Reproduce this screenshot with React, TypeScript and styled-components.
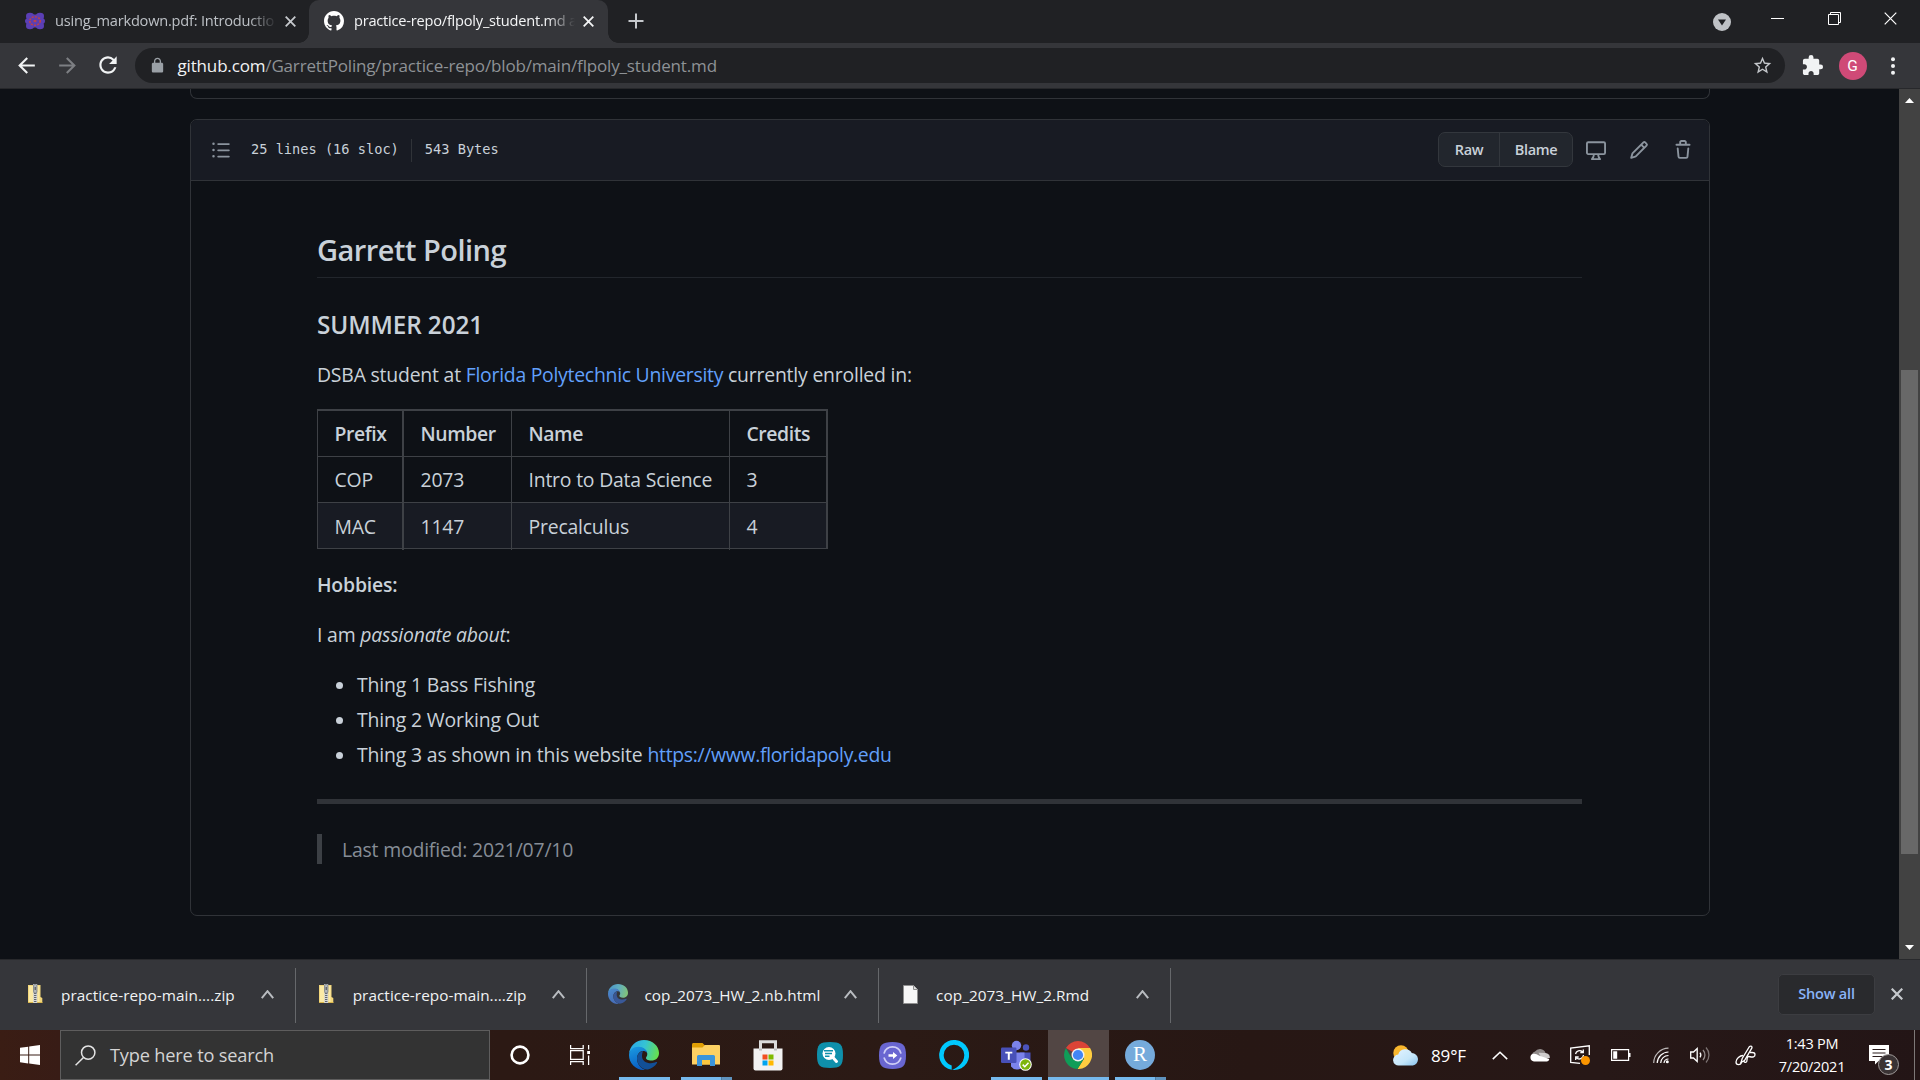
import React from 'react';
import styled, { createGlobalStyle, css } from 'styled-components';

const UI = `"Open Sans", "Noto Sans", sans-serif`;

const c = {
  frame: '#202124',
  toolbar: '#35363a',
  page: '#0e1116',
  panel: '#181b23',
  border: '#303338',
  tableLine: '#3e4146',
  text: '#c9d1d9',
  muted: '#868d96',
  link: '#62a0fb',
};

const Global = createGlobalStyle`
  *, *::before, *::after { box-sizing: border-box; }
  html, body { margin: 0; padding: 0; background: ${c.page}; overflow: hidden; }
  body { font-family: ${UI}; }
  svg { display: block; flex: none; }
`;

const Screen = styled.div`
  width: 1920px;
  height: 1080px;
  display: flex;
  flex-direction: column;
  overflow: hidden;
  background: ${c.page};
`;

/* ---------- tab strip ---------- */

const TabStrip = styled.header`
  height: 43px;
  flex: none;
  display: flex;
  align-items: stretch;
  background: ${c.frame};
`;

const Tab = styled.div<{ $active?: boolean }>`
  position: relative;
  display: flex;
  align-items: center;
  width: ${p => (p.$active ? 299 : 309)}px;
  padding-left: ${p => (p.$active ? 15 : 25)}px;
  padding-right: ${p => (p.$active ? 14 : 13)}px;
  padding-bottom: 1px;
  color: ${p => (p.$active ? '#f4f5f6' : '#bdc1c6')};
  ${p =>
    p.$active &&
    css`
      background: ${c.toolbar};
      border-radius: 10px 10px 0 0;
      &::before,
      &::after {
        content: '';
        position: absolute;
        bottom: 0;
        width: 10px;
        height: 10px;
      }
      &::before {
        left: -10px;
        background: radial-gradient(circle at 0 0, transparent 9.5px, ${c.toolbar} 10px);
      }
      &::after {
        right: -10px;
        background: radial-gradient(circle at 100% 0, transparent 9.5px, ${c.toolbar} 10px);
      }
    `}
`;

const TabTitle = styled.span`
  flex: 1;
  margin: 0 6px 2px 10px;
  font-size: 14.6px;
  line-height: 20px;
  letter-spacing: -0.22px;
  white-space: nowrap;
  mask-image: linear-gradient(90deg, #000 calc(100% - 30px), transparent calc(100% - 2px));
`;

const NewTab = styled.div`
  display: flex;
  align-items: center;
  margin-left: 20px;
  padding-bottom: 1px;
`;

const WindowControls = styled.div`
  margin-left: auto;
  margin-right: 1px;
  display: flex;
  align-items: flex-start;
`;

const ControlSlot = styled.div<{ $w: number; $h: number }>`
  width: ${p => p.$w}px;
  height: ${p => p.$h}px;
  display: flex;
  align-items: center;
  justify-content: center;
`;

/* ---------- toolbar ---------- */

const Toolbar = styled.nav`
  height: 46px;
  flex: none;
  display: flex;
  align-items: center;
  background: ${c.toolbar};
  border-bottom: 1px solid #27282b;
  padding-left: 7px;
`;

const NavButton = styled.span`
  width: 40.5px;
  display: flex;
  justify-content: center;
  padding-right: 1px;
  padding-bottom: 1px;
`;

const Omnibox = styled.div`
  width: 1650px;
  height: 35px;
  margin-left: 6px;
  padding: 0 12px 0 14px;
  display: flex;
  align-items: center;
  background: ${c.frame};
  border-radius: 18px;
`;

const Url = styled.span`
  flex: 1;
  margin-left: 12px;
  font-size: 17px;
  line-height: 34px;
  letter-spacing: -0.16px;
  color: #8e9296;
  b {
    font-weight: 400;
    color: #f1f3f4;
  }
`;

const ToolbarRight = styled.div`
  display: flex;
  align-items: center;
  margin-left: 16px;
`;

const Avatar = styled.span`
  width: 28px;
  height: 28px;
  margin: 0 24px 0 15px;
  border-radius: 50%;
  background: #cf4a77;
  color: #fff;
  font: 15.5px/28px Roboto, sans-serif;
  text-align: center;
`;

/* ---------- viewport ---------- */

const Viewport = styled.main`
  height: 870px;
  flex: none;
  display: flex;
  justify-content: space-between;
`;

const PageColumn = styled.div`
  width: 1520px;
  margin-left: 190px;
`;

const PreviousBox = styled.div`
  height: 10px;
  border: 1px solid ${c.border};
  border-top: 0;
  border-radius: 0 0 7px 7px;
`;

const FileBox = styled.section`
  margin-top: 20px;
  height: 797px;
  border: 1px solid ${c.border};
  border-radius: 7px;
  overflow: hidden;
`;

const FileHeader = styled.div`
  height: 61px;
  display: flex;
  align-items: center;
  padding: 0 16px 1px 20px;
  background: ${c.panel};
  border-bottom: 1px solid ${c.border};
  color: #8b949e;
`;

const FileInfo = styled.div`
  display: flex;
  align-items: center;
  margin-left: 20px;
  font: 13.65px/23px 'DejaVu Sans Mono', monospace;
  color: ${c.text};
`;

const InfoDivider = styled.i`
  width: 1px;
  height: 23px;
  margin: 2px 13px 0 12px;
  background: ${c.border};
`;

const HeaderActions = styled.div`
  margin-left: auto;
  display: flex;
  align-items: center;
`;

const ButtonGroup = styled.div`
  display: flex;
  height: 35px;
  margin-right: 13px;
  border: 1px solid #33373d;
  border-radius: 7px;
  background: #22262d;
`;

const GroupButton = styled.span<{ $w: number }>`
  width: ${p => p.$w}px;
  text-align: center;
  font-size: 14.5px;
  font-weight: 600;
  line-height: 33px;
  letter-spacing: -0.3px;
  color: ${c.text};
  & + & {
    border-left: 1px solid #33373d;
  }
`;

const ActionIcon = styled.span<{ $gap?: number }>`
  margin-left: ${p => p.$gap ?? 0}px;
`;

const Article = styled.article`
  width: 1265px;
  margin: 50px 0 0 126px;
  font-size: 19.4px;
  line-height: 30px;
  letter-spacing: -0.2px;
  color: ${c.text};
`;

const Title = styled.h1`
  margin: 0;
  height: 47px;
  border-bottom: 1px solid #22262c;
  font-size: 29px;
  font-weight: 600;
  line-height: 38px;
  letter-spacing: -0.52px;
`;

const Subtitle = styled.h3`
  margin: 31px 0 20px;
  font-size: 24.3px;
  font-weight: 600;
  line-height: 31px;
  letter-spacing: -0.1px;
`;

const Paragraph = styled.p<{ $bottom: number }>`
  margin: 0 0 ${p => p.$bottom}px;
  strong {
    font-weight: 600;
  }
`;

const Link = styled.a<{ $tight?: number }>`
  color: ${c.link};
  letter-spacing: ${p => p.$tight ?? -0.26}px;
`;

const Table = styled.div`
  width: 511px;
  border: solid ${c.tableLine};
  border-width: 2px 2px 1px 1px;
  margin-bottom: 21px;
`;

const Row = styled.div<{ $head?: boolean; $shaded?: boolean }>`
  display: grid;
  grid-template-columns: 86px 108px 218px 96px;
  height: 46px;
  line-height: 45px;
  font-weight: ${p => (p.$head ? 600 : 400)};
  letter-spacing: ${p => (p.$head ? -0.42 : -0.2)}px;
  background: ${p => (p.$shaded ? c.panel : 'transparent')};
  border-bottom: 1px solid ${c.tableLine};
  &:last-child {
    height: 45px;
    border-bottom: 0;
    line-height: 47px;
  }
`;

const Cell = styled.span`
  padding-left: 16.5px;
  border-right: 1px solid ${c.tableLine};
  &:first-child {
    border-right-width: 2px;
  }
  &:last-child {
    border-right: 0;
  }
`;

const List = styled.ul`
  margin: 0;
  padding: 0 0 0 19px;
  list-style: none;
  display: flex;
  flex-direction: column;
  gap: 5px;
`;

const ListItem = styled.li`
  display: flex;
  align-items: center;
  white-space: pre;
  letter-spacing: -0.15px;
  &::before {
    content: '';
    width: 7px;
    height: 7px;
    margin: 1px 14px 0 0;
    border-radius: 50%;
    background: ${c.text};
  }
`;

const Rule = styled.hr`
  margin: 29px 0 30px;
  height: 5px;
  border: 0;
  background: #303338;
`;

const Quote = styled.blockquote`
  margin: 0;
  padding-left: 20px;
  border-left: 5px solid #3c4045;
  line-height: 31px;
  height: 30px;
  letter-spacing: -0.18px;
  color: ${c.muted};
`;

const Scrollbar = styled.aside`
  width: 21px;
  display: flex;
  flex-direction: column;
  align-items: center;
  background: #424242;
  padding: 9px 1px 9px 0;
`;

const Thumb = styled.div`
  width: 17px;
  height: 484px;
  margin: 267px 0 auto;
  background: #686868;
`;

/* ---------- downloads shelf ---------- */

const Shelf = styled.section`
  height: 71px;
  flex: none;
  display: flex;
  align-items: center;
  padding-left: 4px;
  background: ${c.toolbar};
  border-top: 1px solid #28292c;
`;

const Download = styled.div`
  width: 291.7px;
  height: 55px;
  display: flex;
  align-items: center;
  padding: 0 21px 0 21px;
  border-right: 1px solid #66686b;
`;

const FileIcon = styled.span`
  width: 20px;
  margin-bottom: 2px;
  display: flex;
  justify-content: center;
`;

const FileName = styled.span`
  flex: 1;
  margin-left: 16px;
  font-size: 15.3px;
  line-height: 20px;
  letter-spacing: 0.06px;
  color: #f1f3f4;
`;

const ShowAll = styled.span`
  width: 97px;
  height: 41px;
  margin: 0 16px 2px auto;
  border: 1px solid #3c3d41;
  border-radius: 5px;
  background: #292a2d;
  color: #8ab4f8;
  font-size: 14.5px;
  font-weight: 600;
  line-height: 38px;
  letter-spacing: -0.2px;
  text-align: center;
`;

const ShelfClose = styled.span`
  margin: 0 17px 2px 0;
`;

/* ---------- taskbar ---------- */

const Taskbar = styled.footer`
  height: 50px;
  flex: none;
  display: flex;
  background: linear-gradient(90deg, #3a1d14 0, #381c16 60px, #2c1914 500px, #2b1a15 900px, #271714 1250px, #271817 1600px, #231516 1920px);
`;

const Slot = styled.div<{ $w?: number; $active?: boolean; $gap?: number }>`
  width: ${p => p.$w ?? 62}px;
  margin-left: ${p => p.$gap ?? 0}px;
  display: flex;
  flex-direction: column;
  align-items: center;
`;

const SlotFace = styled.div<{ $active?: boolean }>`
  width: 61px;
  height: 47px;
  padding-top: 3px;
  display: flex;
  align-items: center;
  justify-content: center;
  background: ${p => (p.$active ? '#524644' : 'transparent')};
`;

const Running = styled.div<{ $stacked?: boolean; $active?: boolean }>`
  width: ${p => (p.$active ? 61 : 51)}px;
  height: 3px;
  background: ${p => (p.$stacked ? 'linear-gradient(90deg, #76b9ed 40px, #3f6585 40px, #5f93be 41px)' : '#76b9ed')};
`;

const SearchBox = styled.div`
  width: 430px;
  height: 50px;
  display: flex;
  align-items: center;
  padding-left: 14px;
  background: #333;
  border: 1px solid #5e5d5d;
  color: #d4d4d4;
  font-size: 18.2px;
  letter-spacing: -0.18px;
  gap: 14px;
`;

const Tray = styled.div`
  margin-left: auto;
  display: flex;
  align-items: center;
  color: #fff;
`;

const TrayItem = styled.span<{ $w: number; $gap: number }>`
  width: ${p => p.$w}px;
  margin-left: ${p => p.$gap}px;
  display: flex;
  justify-content: center;
`;

const Temperature = styled(TrayItem)`
  font-size: 17px;
  line-height: 46px;
  letter-spacing: -0.1px;
  padding-top: 2px;
`;

const Clock = styled.div`
  width: 80px;
  margin-left: 16px;
  font-size: 14.5px;
  line-height: 23px;
  letter-spacing: -0.25px;
  text-align: center;
`;

const ActionCenter = styled.div`
  position: relative;
  width: 31px;
  height: 50px;
  margin-left: 17px;
  padding-top: 15px;
`;

const Badge = styled.span`
  position: absolute;
  left: 9px;
  top: 24px;
  width: 21px;
  height: 21px;
  border: 1px solid #a09b9a;
  border-radius: 50%;
  background: #3a3334;
  font-size: 14px;
  font-weight: 700;
  line-height: 19px;
  text-align: center;
`;

const DesktopEdge = styled.i`
  width: 6px;
  height: 50px;
  margin-left: 14px;
  border-left: 1px solid #7d7877;
`;

/* ---------- icons ---------- */

const Glyph = ({ size, d, color = 'currentColor', box = 24 }: { size: number; d: string; color?: string; box?: number }) => (
  <svg width={size} height={size} viewBox={`0 0 ${box} ${box}`} fill={color}>
    <path fillRule="evenodd" d={d} />
  </svg>
);

const P = {
  github:
    'M8 0C3.58 0 0 3.58 0 8c0 3.54 2.29 6.53 5.47 7.59.4.07.55-.17.55-.38 0-.19-.01-.82-.01-1.49-2.01.37-2.53-.49-2.69-.94-.09-.23-.48-.94-.82-1.13-.28-.15-.68-.52-.01-.53.63-.01 1.08.58 1.23.82.72 1.21 1.87.87 2.33.66.07-.52.28-.87.51-1.07-1.78-.2-3.64-.89-3.64-3.95 0-.87.31-1.59.82-2.15-.08-.2-.36-1.02.08-2.12 0 0 .67-.21 2.2.82.64-.18 1.32-.27 2-.27s1.36.09 2 .27c1.53-1.04 2.2-.82 2.2-.82.44 1.1.16 1.92.08 2.12.51.56.82 1.27.82 2.15 0 3.07-1.87 3.75-3.65 3.95.29.25.54.73.54 1.48 0 1.07-.01 1.93-.01 2.2 0 .21.15.46.55.38A8.01 8.01 0 0016 8c0-4.42-3.58-8-8-8z',
  back: 'M20 11H7.83l5.59-5.59L12 4l-8 8 8 8 1.41-1.41L7.83 13H20v-2z',
  forward: 'M12 4l-1.41 1.41L16.17 11H4v2h12.17l-5.58 5.59L12 20l8-8z',
  reload:
    'M17.65 6.35A7.958 7.958 0 0012 4c-4.42 0-7.99 3.58-7.99 8s3.57 8 7.99 8c3.73 0 6.84-2.55 7.73-6h-2.08A5.99 5.99 0 0112 18c-3.31 0-6-2.69-6-6s2.69-6 6-6c1.66 0 3.14.69 4.22 1.78L13 11h7V4l-2.35 2.35z',
  lock: 'M18 8h-1V6c0-2.76-2.24-5-5-5S7 3.24 7 6v2H6c-1.1 0-2 .9-2 2v10c0 1.1.9 2 2 2h12c1.1 0 2-.9 2-2V10c0-1.1-.9-2-2-2zM8.9 6c0-1.71 1.39-3.1 3.1-3.1s3.1 1.39 3.1 3.1v2H8.9V6z',
  star: 'M22 9.24l-7.19-.62L12 2 9.19 8.63 2 9.24l5.46 4.73L5.82 21 12 17.27 18.18 21l-1.63-7.03L22 9.24zM12 15.4l-3.76 2.27 1-4.28-3.32-2.88 4.38-.38L12 6.1l1.71 4.04 4.38.38-3.32 2.88 1 4.28L12 15.4z',
  puzzle:
    'M20.5 11H19V7c0-1.1-.9-2-2-2h-4V3.5a2.5 2.5 0 00-5 0V5H4c-1.1 0-1.99.9-1.99 2v3.8H3.5c1.49 0 2.7 1.21 2.7 2.7s-1.21 2.7-2.7 2.7H2V20c0 1.1.9 2 2 2h3.8v-1.5c0-1.49 1.21-2.7 2.7-2.7s2.7 1.21 2.7 2.7V22H17c1.1 0 2-.9 2-2v-4h1.5a2.5 2.5 0 000-5z',
  list: 'M2 4a1 1 0 100-2 1 1 0 000 2zm3.75-1.5a.75.75 0 000 1.5h8.5a.75.75 0 000-1.5h-8.5zm0 5a.75.75 0 000 1.5h8.5a.75.75 0 000-1.5h-8.5zm0 5a.75.75 0 000 1.5h8.5a.75.75 0 000-1.5h-8.5zM3 8a1 1 0 11-2 0 1 1 0 012 0zm-1 6a1 1 0 100-2 1 1 0 000 2z',
  desktop:
    'M1.75 2.5h12.5a.25.25 0 01.25.25v7.5a.25.25 0 01-.25.25H1.75a.25.25 0 01-.25-.25v-7.5a.25.25 0 01.25-.25zM14.25 1H1.75A1.75 1.75 0 000 2.75v7.5C0 11.216.784 12 1.75 12h3.727c-.1 1.041-.52 1.872-1.292 2.757A.75.75 0 004.75 16h6.5a.75.75 0 00.565-1.243c-.772-.885-1.193-1.716-1.292-2.757h3.727A1.75 1.75 0 0016 10.25v-7.5A1.75 1.75 0 0014.25 1zM9.018 12H6.982a5.72 5.72 0 01-.765 2.5h3.566a5.72 5.72 0 01-.765-2.5z',
  pencil:
    'M11.013 1.427a1.75 1.75 0 012.474 0l1.086 1.086a1.75 1.75 0 010 2.474l-8.61 8.61c-.21.21-.47.364-.756.445l-3.251.93a.75.75 0 01-.927-.928l.929-3.25a1.75 1.75 0 01.445-.758l8.61-8.61zm1.414 1.06a.25.25 0 00-.354 0L10.811 3.75l1.439 1.44 1.263-1.263a.25.25 0 000-.354l-1.086-1.086zM11.189 6.25L9.75 4.81l-6.286 6.287a.25.25 0 00-.064.108l-.558 1.953 1.953-.558a.249.249 0 00.108-.064l6.286-6.286z',
  trash:
    'M6.5 1.75a.25.25 0 01.25-.25h2.5a.25.25 0 01.25.25V3h-3V1.75zm4.5 0V3h2.25a.75.75 0 010 1.5H2.75a.75.75 0 010-1.5H5V1.75C5 .784 5.784 0 6.75 0h2.5C10.216 0 11 .784 11 1.75zM4.496 6.675a.75.75 0 10-1.492.15l.66 6.6A1.75 1.75 0 005.405 15h5.19c.9 0 1.652-.681 1.741-1.576l.66-6.6a.75.75 0 00-1.492-.149l-.66 6.6a.25.25 0 01-.249.225h-5.19a.25.25 0 01-.249-.225l-.66-6.6z',
};

const Cross = ({ size, w, color }: { size: number; w: number; color: string }) => (
  <svg width={size} height={size} viewBox={`0 0 ${size} ${size}`} stroke={color} strokeWidth={w} fill="none">
    <path d={`M.7 .7L${size - 0.7} ${size - 0.7}M${size - 0.7} .7L.7 ${size - 0.7}`} />
  </svg>
);

const GearBlob = () => (
  <svg width="20" height="18" viewBox="0 0 20 22" preserveAspectRatio="none">
    <g fill="#5b3fb5">
      <rect x="1.5" y="3" width="17" height="16" rx="3" />
      <circle cx="5" cy="5" r="4" />
      <circle cx="15" cy="5" r="4" />
      <circle cx="3.5" cy="11" r="3.5" />
      <circle cx="16.5" cy="11" r="3.5" />
      <circle cx="5" cy="17" r="4" />
      <circle cx="15" cy="17" r="4" />
    </g>
    <circle cx="10" cy="11" r="5.2" fill="none" stroke="#b8434f" strokeWidth="1.8" strokeDasharray="2.2 1.2" />
    <circle cx="10" cy="11" r="1.6" fill="#b8434f" />
  </svg>
);

const ZipIcon = () => (
  <svg width="15" height="20" viewBox="0 0 15 20">
    <path d="M0 1h12.5v12l1.8 1v5H0z" fill="#f3d77b" />
    <path d="M1 2h4v16H1zM9.5 2h2v16h-2z" fill="#fbeaa6" />
    <path d="M0 18h14.3v1H0z" fill="#d9b64c" />
    <rect x="5.2" y="0" width="4" height="19" fill="#d6d8da" />
    <path d="M7.2 9v10" stroke="#63676b" strokeWidth="2.4" strokeDasharray="1 1" />
    <rect x="5.6" y=".5" width="3.3" height="8.5" rx="1.2" fill="#b4b8bc" stroke="#74787c" strokeWidth=".8" />
    <rect x="6.6" y="3" width="1.3" height="3" fill="#5c6064" />
  </svg>
);

const PageIcon = () => (
  <svg width="15" height="19" viewBox="0 0 15 19">
    <path d="M.5 .5h10l4 4v14H.5z" fill="#f7f7f7" stroke="#8f8f8f" />
    <path d="M10.5 .5v4h4" fill="#dedede" stroke="#8f8f8f" />
  </svg>
);

const EdgeIcon = ({ size, id, dim }: { size: number; id: string; dim?: boolean }) => (
  <svg width={size} height={size} viewBox="0 0 30 30" opacity={dim ? 0.85 : 1}>
    <defs>
      <linearGradient id={`${id}a`} x1="0" y1=".3" x2="1" y2=".5">
        <stop offset="0" stopColor={dim ? '#4fa6e0' : '#2aa7e8'} />
        <stop offset=".5" stopColor={dim ? '#68c3d8' : '#35c3d4'} />
        <stop offset="1" stopColor={dim ? '#8fdc84' : '#66e04e'} />
      </linearGradient>
      <linearGradient id={`${id}b`} x1="0" y1="0" x2=".3" y2="1">
        <stop offset="0" stopColor={dim ? '#4f9ae6' : '#1b9de2'} />
        <stop offset="1" stopColor={dim ? '#4a78cf' : '#0a5fc4'} />
      </linearGradient>
    </defs>
    <path d="M0 14C.6 6 7 0 15 0c8.500 0 15 6 15 13 0 5-3.500 7.500-7.500 7.500-4 0-5.500-1.500-5.500-2.500s1.300-1.600 1.300-4C18.300 10.500 14.500 7.500 10 7.500 5 7.500 1 10.500 0 14z" fill={`url(#${id}a)`} />
    <path d="M0 15c0-5 4.500-8.300 9.500-8.300S18 10 18.200 13c-1-1.500-2.600-2-4-2-3.500 0-6.200 3.500-6.200 7.500 0 5 3 9.500 8 11.400C7 30.600 0 23.500 0 15z" fill={`url(#${id}b)`} />
    <path d="M14 11.200c-3.500.5-6 3.700-6 7.300 0 6 5 11.500 11 10.900 3.700-.8 7.200-3.400 9-6.400.4-.8-.2-1.300-1-.9-4.500 2.400-14.500 1.400-14-6.900.1-1.700.5-3 1-4z" fill={dim ? '#3a5fa8' : '#124f96'} />
  </svg>
);

const ExplorerIcon = () => (
  <svg width="28" height="24" viewBox="0 0 28 24">
    <path d="M0 1.500C0 .6.600 0 1.500 0h9l2.500 2.500v3H0z" fill="#e09f05" />
    <path d="M0 4.500h10.500l2.300-2.500H27a1 1 0 011 1v18.500H0z" fill="#fdd163" />
    <path d="M5 23v-9.500a1.500 1.500 0 011.500-1.500h15a1.500 1.500 0 011.500 1.500V23h-5v-6h-8v6z" fill="#3b95db" />
    <path d="M10 17h8v4.500h-8z" fill="#fbc740" />
  </svg>
);

const StoreIcon = () => (
  <svg width="30" height="31" viewBox="0 0 30 31">
    <path d="M7.500 9V1.800h15V9" fill="none" stroke="#dcdcdc" strokeWidth="3" />
    <path d="M.5 8.500h29V28.500a2 2 0 01-2 2h-25a2 2 0 01-2-2z" fill="#f2f2f2" />
    <path d="M6 8.500h3v2H6zM21 8.500h3v2h-3z" fill="#bdbdbd" />
    <path d="M9.500 14.500h5v5h-5z" fill="#f25022" />
    <path d="M15.500 14.500h5v5h-5z" fill="#7fba00" />
    <path d="M9.500 20.500h5v5h-5z" fill="#00a4ef" />
    <path d="M15.500 20.500h5v5h-5z" fill="#ffb900" />
  </svg>
);

const FinderIcon = () => (
  <svg width="26" height="26" viewBox="0 0 26 26">
    <path d="M13 0c10.500 0 13 2.500 13 13s-2.500 13-13 13S0 23.500 0 13 2.500 0 13 0z" fill="#0f90ab" />
    <circle cx="12" cy="11.500" r="6.500" fill="#fff" />
    <path d="M15.500 15l4 4.500" stroke="#fff" strokeWidth="3" strokeLinecap="round" />
    <path d="M7 8.700h9M8 11.500h7M8 14.200h4.500" stroke="#0f90ab" strokeWidth="1.400" />
  </svg>
);

const TransferIcon = () => (
  <svg width="27" height="27" viewBox="0 0 27 27">
    <path d="M13.500 0C24 0 27 3 27 13.500S24 27 13.500 27 0 24 0 13.500 3 0 13.500 0z" fill="#6966d1" />
    <path d="M5.200 11a8.700 8.700 0 0116.600 0M21.800 16a8.700 8.700 0 01-16.600 0" fill="none" stroke="#cfcff6" strokeWidth="1.700" strokeLinecap="round" />
    <path d="M9.500 12.200h4.500V9.900l4.300 3.600-4.300 3.600v-2.300H9.500z" fill="#fff" />
  </svg>
);

const AlexaIcon = () => (
  <svg width="30" height="30" viewBox="0 0 30 30">
    <path d="M12.700 29.800A15 15 0 1115 30l-2 0c2.500-1.200 12.300-5.500 12.300-15A10.300 10.300 0 104.700 15c0 5 3.500 9 8 10.400z" fill="#00c8fd" />
  </svg>
);

const TeamsIcon = () => (
  <svg width="31" height="31" viewBox="0 0 31 31">
    <circle cx="25" cy="7.500" r="3.200" fill="#4b53bc" />
    <path d="M19 12.500h10.500v9a5 5 0 01-7 4.500z" fill="#4b53bc" />
    <circle cx="15.500" cy="5.500" r="4.700" fill="#7b83eb" />
    <path d="M10 12.500h13.500v10a7.500 7.500 0 01-13.500 4z" fill="#7b83eb" />
    <rect x="0" y="7.500" width="15.500" height="15.500" rx="1.200" fill="#4850b8" />
    <path d="M4.300 11.700h7v1.900H8.800v6.200H6.800v-6.200H4.300z" fill="#fff" />
    <circle cx="24.500" cy="24.500" r="6.300" fill="#fff" />
    <circle cx="24.500" cy="24.500" r="5.200" fill="#7cb50a" />
    <path d="M21.700 24.600l2.100 2.100 3.700-4" fill="none" stroke="#fff" strokeWidth="1.500" />
  </svg>
);

const ChromeIcon = () => (
  <svg width="28" height="28" viewBox="0 0 28 28">
    <path d="M14 14L1.900 7A14 14 0 0126.100 7z" fill="#db4437" />
    <path d="M14 7h12.100A14 14 0 0113.500 28l6.600-10.500z" fill="#ffcd40" />
    <path d="M1.900 7A14 14 0 0013.500 28l6.500-10.500L8 17.500z" fill="#0f9d58" />
    <circle cx="14" cy="14" r="6.500" fill="#f1f1f1" />
    <circle cx="14" cy="14" r="5.100" fill="#4285f4" />
  </svg>
);

const RDisc = styled.span`
  width: 30px;
  height: 30px;
  border-radius: 50%;
  background: #75aadb;
  color: #fff;
  font: 21px/29px 'Liberation Serif', serif;
  text-align: center;
`;

const WeatherIcon = () => (
  <svg width="26" height="21" viewBox="0 0 26 21">
    <defs>
      <linearGradient id="cloud" x1="0" y1="0" x2="1" y2="1">
        <stop offset="0" stopColor="#e4f4ff" />
        <stop offset=".6" stopColor="#c5e6fa" />
        <stop offset="1" stopColor="#86c1ec" />
      </linearGradient>
    </defs>
    <circle cx="8" cy="8" r="7.700" fill="#f8b62d" />
    <path d="M6 20.500a5.500 5.500 0 01-.8-11A7.500 7.500 0 0118.800 8a6.300 6.300 0 011 12.500z" fill="url(#cloud)" />
  </svg>
);

const CloudIcon = () => (
  <svg width="20" height="14" viewBox="0 0 20 14">
    <path d="M2 10.500a5 5 0 013-7 6 6 0 0110.500 1.200L8 10z" fill="#8f8988" />
    <path d="M8.500 4.700l7 .2a4.500 4.500 0 014.300 5l-8 .5z" fill="#cfcccc" />
    <path d="M4 13.500a3.900 3.900 0 01-.5-7.700c2-.3 3.500.5 6 2l9.800 3.200a3 3 0 01-2.300 2.500z" fill="#fff" />
  </svg>
);

const UpdateIcon = () => (
  <svg width="20" height="20" viewBox="0 0 20 20" fill="none" stroke="#fff" strokeWidth="1.300">
    <path d="M10 18.300l-9.300-1V3L19.300.8V10" />
    <path d="M5.500 9a4.300 4.300 0 017-2.300M13.300 4.500v3h-3M13.500 10a4.300 4.300 0 01-7 3M5.700 15v-3h3" />
    <circle cx="15.500" cy="15.500" r="4.500" fill="#fb9500" stroke="none" />
  </svg>
);

const BatteryIcon = () => (
  <svg width="20" height="12" viewBox="0 0 20 12">
    <path d="M.6.600h17v10.800H.6z" fill="none" stroke="#fff" strokeWidth="1.200" />
    <path d="M2.200 2.200h4v7.600h-4zM18 4h1.500v4H18z" fill="#fff" />
  </svg>
);

const WifiIcon = () => (
  <svg width="17" height="17" viewBox="0 0 17 17" fill="none" stroke="#fff" strokeWidth="1.200">
    <path d="M.7 16A15 15 0 0115.500 1.200" opacity=".7" />
    <path d="M4.200 16A11.500 11.500 0 0115.500 5" />
    <path d="M7.700 16a7.800 7.800 0 017.800-7.500M11 16a4.500 4.500 0 014.500-4" />
    <circle cx="14.300" cy="14.700" r="1.500" fill="#fff" stroke="none" />
  </svg>
);

const SpeakerIcon = () => (
  <svg width="21" height="18" viewBox="0 0 21 18" fill="none" stroke="#fff" strokeWidth="1.300">
    <path d="M.7 6h2.800L7.200 2.500v13L3.500 12H.7z" />
    <path d="M10 6.700a4 4 0 010 4.600" />
    <path d="M13 4a7.500 7.500 0 010 10" opacity=".5" />
    <path d="M16 1.500a11 11 0 010 15" opacity=".4" />
  </svg>
);

const PenIcon = () => (
  <svg width="21" height="21" viewBox="0 0 21 21" fill="none" stroke="#fff" strokeWidth="1.300">
    <path d="M6 17.500l1.200-4L14.500 1.500c1.500-1 3 0 2.300 1.700L9.500 15.500z" />
    <path d="M8 10.500c-3 0-7 3-7 6.500 0 3.500 5 3.500 5.500 0M8.500 15.800c1.500 2.500 3.500 2 3.500-.8 0-1.500 0-3.500 1.500-3.500s3 1 5 .3c2-.8 2.500-4.300-1.500-4.300h-2" />
  </svg>
);

const Caret = ({ w, h, s, color }: { w: number; h: number; s: number; color: string }) => (
  <svg width={w} height={h} viewBox={`0 0 ${w} ${h}`} fill="none" stroke={color} strokeWidth={s}>
    <path d={`M.8 ${h - 0.9}L${w / 2} 1.200L${w - 0.8} ${h - 0.9}`} />
  </svg>
);

const CaretLift = styled.span`
  padding-bottom: 2px;
`;

const downloads = [
  { name: 'practice-repo-main....zip', icon: <ZipIcon /> },
  { name: 'practice-repo-main....zip', icon: <ZipIcon /> },
  { name: 'cop_2073_HW_2.nb.html', icon: <EdgeIcon size={20} id="dl" dim /> },
  { name: 'cop_2073_HW_2.Rmd', icon: <PageIcon /> },
];

const courses = [
  ['COP', '2073', 'Intro to Data Science', '3'],
  ['MAC', '1147', 'Precalculus', '4'],
];

const apps: { icon: React.ReactNode; running?: boolean; stacked?: boolean; active?: boolean }[] = [
  { icon: <EdgeIcon size={30} id="tb" />, running: true },
  { icon: <ExplorerIcon />, running: true, stacked: true },
  { icon: <StoreIcon /> },
  { icon: <FinderIcon /> },
  { icon: <TransferIcon /> },
  { icon: <AlexaIcon /> },
  { icon: <TeamsIcon />, running: true },
  { icon: <ChromeIcon />, running: true, active: true },
  { icon: <RDisc>R</RDisc>, running: true, stacked: true },
];

export default function App() {
  return (
    <Screen>
      <Global />
      <TabStrip>
        <Tab>
          <GearBlob />
          <TabTitle>using_markdown.pdf: Introductio</TabTitle>
          <Cross size={11} w={1.8} color="#c6c9cd" />
        </Tab>
        <Tab $active>
          <Glyph size={20} box={16} d={P.github} color="#fff" />
          <TabTitle>practice-repo/flpoly_student.md a</TabTitle>
          <Cross size={11} w={1.8} color="#f4f5f6" />
        </Tab>
        <NewTab>
          <svg width="16" height="16" viewBox="0 0 16 16" stroke="#c6c9cd" strokeWidth="2">
            <path d="M8 .5v15M.5 8h15" />
          </svg>
        </NewTab>
        <WindowControls>
          <ControlSlot $w={54} $h={43}>
            <svg width="18" height="18" viewBox="0 0 18 18">
              <circle cx="9" cy="9" r="9" fill="#bfc2c6" />
              <path d="M5 6.500h8L9 12.500z" fill={c.frame} />
            </svg>
          </ControlSlot>
          <ControlSlot $w={57} $h={37}>
            <svg width="13" height="1" viewBox="0 0 13 1"><path d="M0 0h13v1H0z" fill="#fff" /></svg>
          </ControlSlot>
          <ControlSlot $w={56} $h={37}>
            <svg width="13" height="13" viewBox="0 0 13 13" fill="none" stroke="#fff">
              <path d="M.5 2.500h10v10H.5zM2.500 2.500v-2h10v10h-2" />
            </svg>
          </ControlSlot>
          <ControlSlot $w={57} $h={37}>
            <Cross size={13} w={1.2} color="#fff" />
          </ControlSlot>
        </WindowControls>
      </TabStrip>

      <Toolbar>
        <NavButton><Glyph size={25} d={P.back} color="#f1f3f4" /></NavButton>
        <NavButton><Glyph size={25} d={P.forward} color="#7d7f83" /></NavButton>
        <NavButton><Glyph size={26} d={P.reload} color="#f1f3f4" /></NavButton>
        <Omnibox>
          <Glyph size={17} d={P.lock} color="#9aa0a6" />
          <Url><b>github.com</b>/GarrettPoling/practice-repo/blob/main/flpoly_student.md</Url>
          <Glyph size={21} d={P.star} color="#c4c7cb" />
        </Omnibox>
        <ToolbarRight>
          <Glyph size={23} d={P.puzzle} color="#f1f3f4" />
          <Avatar>G</Avatar>
          <svg width="4" height="18" viewBox="0 0 4 18" fill="#f1f3f4">
            <circle cx="2" cy="2.200" r="2" /><circle cx="2" cy="9" r="2" /><circle cx="2" cy="15.800" r="2" />
          </svg>
        </ToolbarRight>
      </Toolbar>

      <Viewport>
        <PageColumn>
          <PreviousBox />
          <FileBox>
            <FileHeader>
              <Glyph size={20} box={16} d={P.list} />
              <FileInfo>
                25 lines (16 sloc)
                <InfoDivider />
                543 Bytes
              </FileInfo>
              <HeaderActions>
                <ButtonGroup>
                  <GroupButton $w={60}>Raw</GroupButton>
                  <GroupButton $w={73}>Blame</GroupButton>
                </ButtonGroup>
                <ActionIcon><Glyph size={20} box={16} d={P.desktop} /></ActionIcon>
                <ActionIcon $gap={23}><Glyph size={20} box={16} d={P.pencil} /></ActionIcon>
                <ActionIcon $gap={24}><Glyph size={20} box={16} d={P.trash} /></ActionIcon>
              </HeaderActions>
            </FileHeader>
            <Article>
              <Title>Garrett Poling</Title>
              <Subtitle>SUMMER 2021</Subtitle>
              <Paragraph $bottom={19}>
                DSBA student at <Link>Florida Polytechnic University</Link> currently enrolled in:
              </Paragraph>
              <Table>
                <Row $head>
                  {['Prefix', 'Number', 'Name', 'Credits'].map(h => <Cell key={h}>{h}</Cell>)}
                </Row>
                {courses.map((r, i) => (
                  <Row key={r[0]} $shaded={i % 2 === 1}>
                    {r.map(v => <Cell key={v}>{v}</Cell>)}
                  </Row>
                ))}
              </Table>
              <Paragraph $bottom={20}><strong>Hobbies:</strong></Paragraph>
              <Paragraph $bottom={20}>I am <em>passionate about</em>:</Paragraph>
              <List>
                <ListItem>Thing 1 Bass Fishing</ListItem>
                <ListItem>Thing 2 Working Out</ListItem>
                <ListItem>Thing 3 as shown in this website <Link $tight={-0.32}>https://www.floridapoly.edu</Link></ListItem>
              </List>
              <Rule />
              <Quote>Last modified: 2021/07/10</Quote>
            </Article>
          </FileBox>
        </PageColumn>
        <Scrollbar>
          <svg width="9" height="5" viewBox="0 0 9 5"><path d="M0 5L4.500 0 9 5z" fill="#fff" /></svg>
          <Thumb />
          <svg width="9" height="5" viewBox="0 0 9 5"><path d="M0 0h9L4.500 5z" fill="#fff" /></svg>
        </Scrollbar>
      </Viewport>

      <Shelf>
        {downloads.map((d, i) => (
          <Download key={i}>
            <FileIcon>{d.icon}</FileIcon>
            <FileName>{d.name}</FileName>
            <CaretLift><Caret w={13} h={9} s={2} color="#b9bcc0" /></CaretLift>
          </Download>
        ))}
        <ShowAll>Show all</ShowAll>
        <ShelfClose><Cross size={12} w={2.2} color="#c6c9cd" /></ShelfClose>
      </Shelf>

      <Taskbar>
        <Slot $w={60}>
          <SlotFace>
            <svg width="20" height="20" viewBox="0 0 20 20" fill="#fff">
              <path d="M0 2.800l8.200-1.100v7.900H0zM9.200 1.500L20 0v9.600H9.200zM0 10.500h8.200v7.900L0 17.300zM9.200 10.500H20V20L9.200 18.500z" />
            </svg>
          </SlotFace>
        </Slot>
        <SearchBox>
          <svg width="21" height="21" viewBox="0 0 21 21" fill="none" stroke="#e4e4e4" strokeWidth="1.500">
            <circle cx="13.200" cy="7.600" r="6.700" />
            <path d="M8.500 12.500L.6 20.300" />
          </svg>
          Type here to search
        </SearchBox>
        <Slot $w={60}>
          <SlotFace>
            <svg width="20" height="20" viewBox="0 0 20 20"><circle cx="10" cy="10" r="8.400" fill="none" stroke="#fff" strokeWidth="2.600" /></svg>
          </SlotFace>
        </Slot>
        <Slot $w={60}>
          <SlotFace>
            <svg width="20" height="20" viewBox="0 0 20 20" fill="none" stroke="#fff" strokeWidth="1.250">
              <path d="M.6 0v3.500h12.600V0M.6 20v-3.500h12.600V20M.6 5.600h12.600v8.700H.6zM18.600 0v4.500M18.600 10.500V20" />
              <path d="M17.200 6h2.800v3h-2.800z" fill="#fff" stroke="none" />
            </svg>
          </SlotFace>
        </Slot>
        {apps.map((a, i) => (
          <Slot key={i} $gap={i === 0 ? 3 : 0}>
            <SlotFace $active={a.active}>{a.icon}</SlotFace>
            {a.running && <Running $stacked={a.stacked} $active={a.active} />}
          </Slot>
        ))}
        <Tray>
          <TrayItem $w={26} $gap={0}><WeatherIcon /></TrayItem>
          <Temperature $w={37} $gap={11}>89°F</Temperature>
          <TrayItem $w={16} $gap={25}><Caret w={16} h={9} s={1.5} color="#fff" /></TrayItem>
          <TrayItem $w={20} $gap={22}><CloudIcon /></TrayItem>
          <TrayItem $w={20} $gap={20}><UpdateIcon /></TrayItem>
          <TrayItem $w={20} $gap={21}><BatteryIcon /></TrayItem>
          <TrayItem $w={17} $gap={22}><WifiIcon /></TrayItem>
          <TrayItem $w={21} $gap={20}><SpeakerIcon /></TrayItem>
          <TrayItem $w={21} $gap={24}><PenIcon /></TrayItem>
          <Clock>1:43 PM<br />7/20/2021</Clock>
          <ActionCenter>
            <svg width="20" height="20" viewBox="0 0 20 20">
              <path d="M0 0h20v16H9.500L6 19.500V16H0z" fill="#fff" />
              <path d="M3.500 4.500h13M3.500 8h13M3.500 11.500h13" stroke="#2a1c1c" strokeWidth="1.200" />
            </svg>
            <Badge>3</Badge>
          </ActionCenter>
          <DesktopEdge />
        </Tray>
      </Taskbar>
    </Screen>
  );
}
